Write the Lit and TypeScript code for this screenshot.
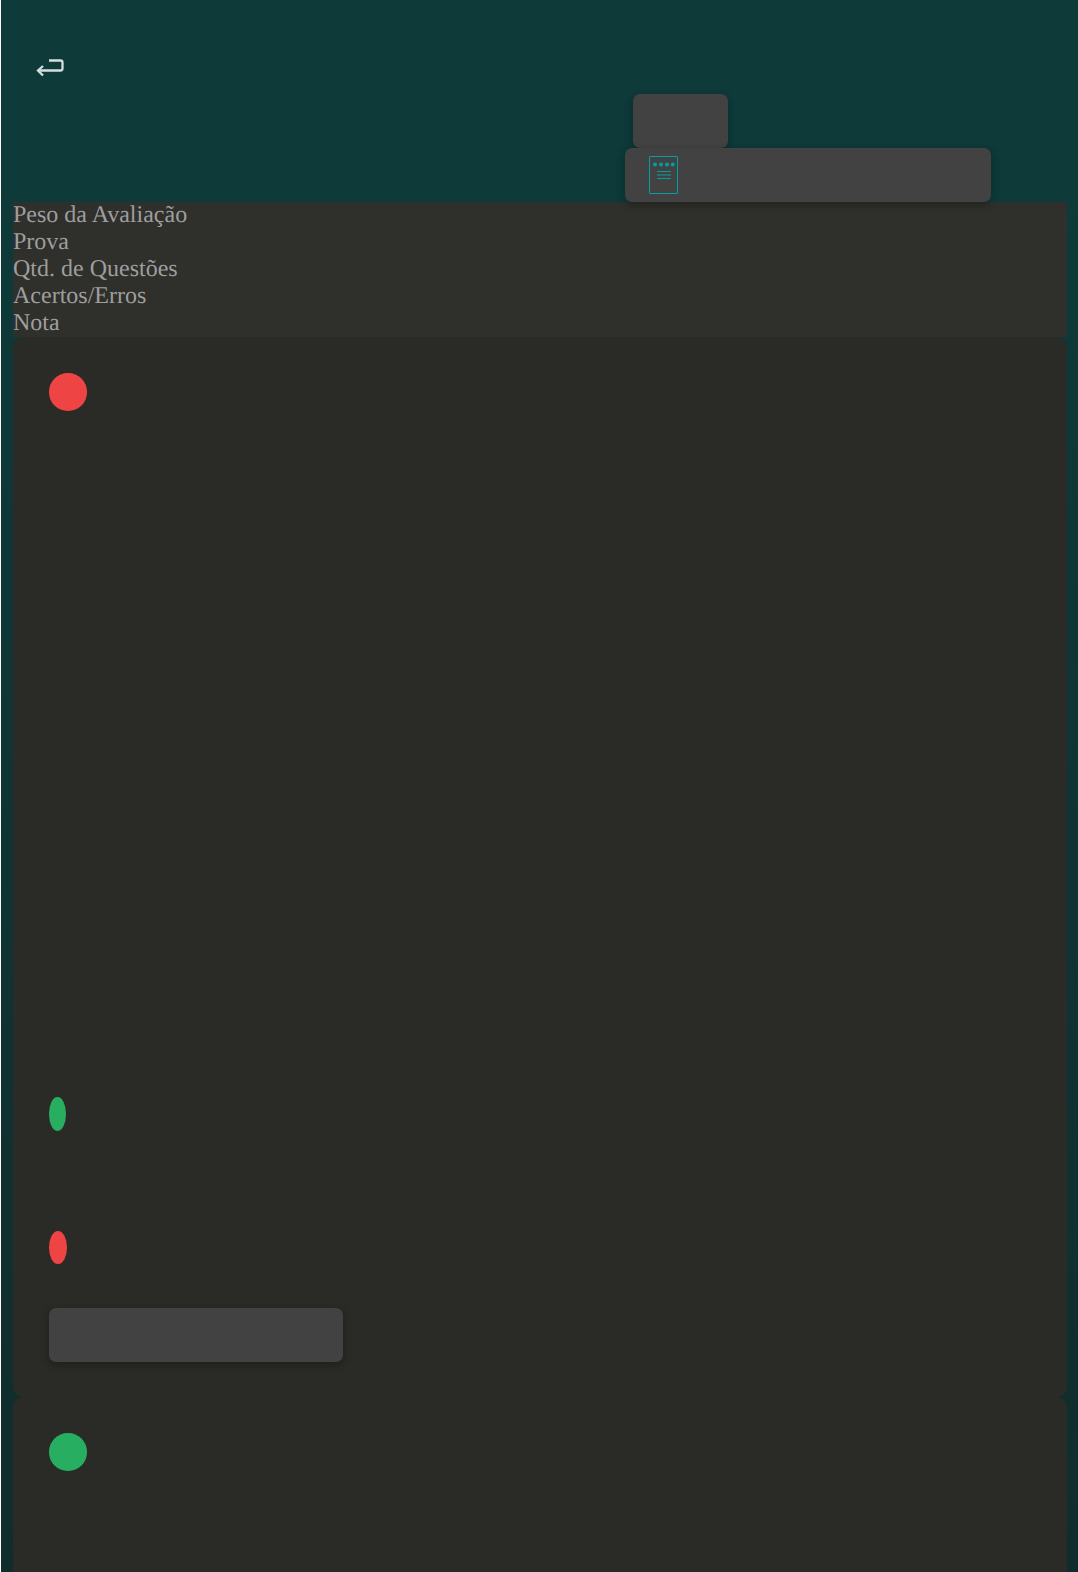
import { LitElement, html, css } from "lit";
import { customElement } from "lit/decorators.js";

@customElement("app-root")
export class AppRoot extends LitElement {
  static styles = css`
    :host {
      display: block;
      height: 1572px;
      overflow: hidden;
      background: #ffffff;
      font-family: "Liberation Serif", serif;
    }
    .page {
      margin-left: 1px;
      height: 1572px;
      padding: 0 11px 0 12px;
      box-sizing: border-box;
      background: linear-gradient(180deg, #0e3a3a 0%, #0e3a3a 12%, #112c2c 100%);
      overflow: hidden;
    }
    .header {
      height: 202px;
      box-sizing: border-box;
      padding-top: 53px;
      display: flex;
      flex-direction: column;
    }
    .back {
      display: block;
      margin-left: 22px;
      width: 32px;
      height: 28px;
    }
    .actions {
      margin-top: 13px;
      margin-left: 612px;
      display: flex;
      flex-direction: column;
      align-items: flex-start;
    }
    .btn {
      background: #424242;
      border-radius: 7px;
      box-shadow: 0 3px 8px rgba(0, 0, 0, 0.3);
      box-sizing: border-box;
    }
    .small { width: 95.5px; height: 54px; margin-left: 7.5px; }
    .wide {
      width: 366px;
      height: 54px;
      padding: 8px 0 0 24px;
    }
    .wide svg { display: block; }
    .summary {
      background: #2f2f2b;
      color: #9e9e9e;
      font-size: 24px;
      line-height: 27px;
      text-rendering: geometricPrecision;
    }
    .card {
      background: #2a2a26;
      border-radius: 10px;
      height: 1060px;
      box-sizing: border-box;
      padding: 36px 36px 0;
      display: flex;
      flex-direction: column;
      align-items: flex-start;
    }
    .dot { border-radius: 50%; }
    .red { background: #ef4444; }
    .green { background: #27ae60; }
    .big { width: 37.5px; height: 37.5px; }
    .g-oval { width: 16.5px; height: 33.5px; margin-top: 686.5px; }
    .r-oval { width: 18px; height: 33.5px; margin-top: 100px; }
    .lower { width: 294px; height: 54px; margin-top: 43.5px; }
  `;

  render() {
    return html`<div class="page">
      <div class="header">
        <svg class="back" viewBox="0 0 32 28" fill="none" stroke="#d5dedd" stroke-width="2.3">
          <path d="M14 7.5H25.5Q27.5 7.5 27.5 9.5V15.5Q27.5 17.5 25.5 17.5H3" />
          <path d="M8 13L3 17.5L8 22.5" />
        </svg>
        <div class="actions">
          <div class="btn small"></div>
          <div class="btn wide">
            <svg width="30" height="38" viewBox="0 0 30 38" fill="none" stroke="#00a0a0">
              <rect x="0.5" y="0.5" width="28" height="37" rx="0.5" />
              <g fill="#00a0a0" stroke="none">
                <circle cx="6" cy="8.5" r="2" />
                <circle cx="12" cy="8.5" r="2" />
                <circle cx="18" cy="8.5" r="2" />
                <circle cx="23.7" cy="8.5" r="2" />
              </g>
              <path d="M8 15.5H22M8 19H22M8 22.5H22" />
            </svg>
          </div>
        </div>
      </div>
      <div class="summary">
        <div>Peso da Avaliação</div>
        <div>Prova</div>
        <div>Qtd. de Questões</div>
        <div>Acertos/Erros</div>
        <div>Nota</div>
      </div>
      <div class="card">
        <div class="dot red big"></div>
        <div class="dot green g-oval"></div>
        <div class="dot red r-oval"></div>
        <div class="btn lower"></div>
      </div>
      <div class="card">
        <div class="dot green big"></div>
      </div>
    </div>`;
  }
}
